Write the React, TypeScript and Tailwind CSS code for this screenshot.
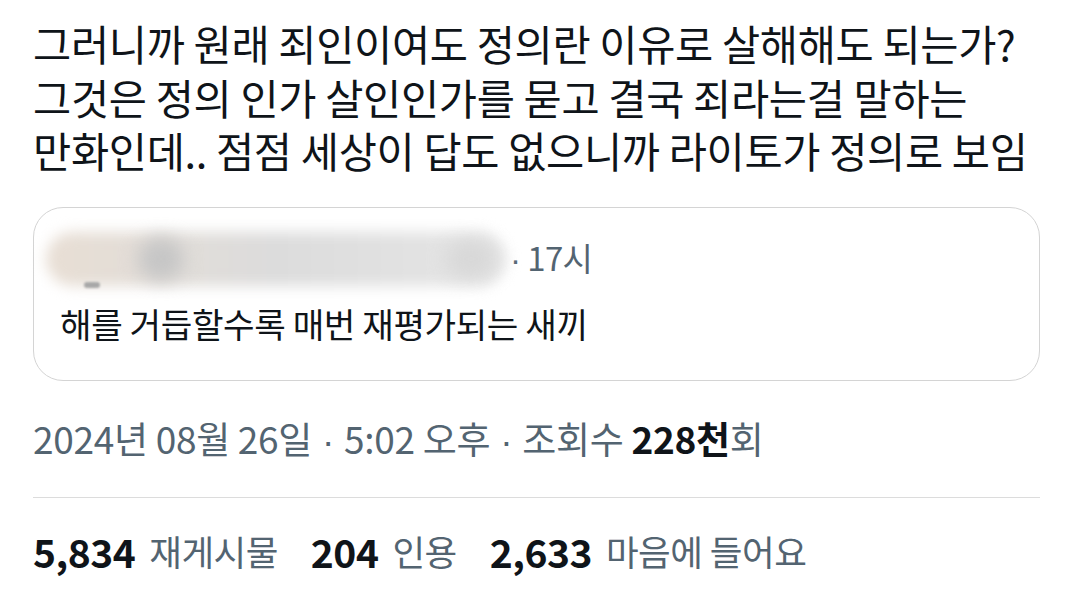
export default function App() {
  const lines = [
    "그러니까 원래 죄인이여도 정의란 이유로 살해해도 되는가?",
    "그것은 정의 인가 살인인가를 묻고 결국 죄라는걸 말하는",
    "만화인데.. 점점 세상이 답도 없으니까 라이토가 정의로 보임",
  ];

  const dot = (
    <span style={{ fontFamily: '"Liberation Sans", sans-serif' }}> · </span>
  );

  const stats = [
    { n: "5,834", label: "재게시물" },
    { n: "204", label: "인용" },
    { n: "2,633", label: "마음에 들어요" },
  ];

  return (
    <div
      className="w-[1072px] h-[596px] bg-white overflow-hidden text-[#0f1419]"
      style={{ fontFamily: '"Noto Sans CJK KR", "Noto Sans", sans-serif' }}
    >
      <div className="pl-[33px] pr-[32px] pt-[17px]">
        {/* Tweet body */}
        <div className="text-[41.5px] leading-[53.5px] tracking-[-0.3px]">
          {lines.map((l) => (
            <div key={l} className="whitespace-nowrap">
              {l}
            </div>
          ))}
        </div>

        {/* Quoted tweet */}
        <div className="mt-[29px] h-[174px] rounded-[30px] border border-[#d4d4d4] px-[12px] pt-[20px]">
          <div className="flex items-center gap-[4px] h-[62px]">
            <div className="relative w-[460px] h-[54px]">
              <div className="absolute inset-0 rounded-full bg-gradient-to-r from-[#e8ded4] via-[#dcdcdc] to-[#e6e6e6] blur-[7px]" />
              <div className="absolute left-[92px] top-[6px] w-[46px] h-[42px] rounded-full bg-[#c6c6c6] blur-[9px]" />
              <div className="absolute left-[400px] top-[8px] w-[50px] h-[38px] rounded-full bg-[#d8d8d8] blur-[9px]" />
              <div className="absolute left-[38px] top-[50px] w-[16px] h-[6px] rounded-full bg-[#a8a8a8] blur-[1px]" />
            </div>
            <span className="text-[33px] text-[#536471] tracking-[-0.6px]">
              <span style={{ fontFamily: '"Liberation Sans", sans-serif' }}>·</span> 17시
            </span>
          </div>
          <div className="mt-[13px] pl-[14px] text-[34.3px] leading-[40px] tracking-[-0.4px]">
            해를 거듭할수록 매번 재평가되는 새끼
          </div>
        </div>

        {/* Timestamp */}
        <div className="mt-[35px] text-[37px] leading-[44px] text-[#536471] tracking-[-0.3px] whitespace-nowrap">
          2024년 08월 26일{dot}5:02 오후{dot}조회수{" "}
          <span className="font-bold text-[#0f1419]">228천</span>회
        </div>

        {/* Divider */}
        <div className="mt-[33px] h-px bg-[#dcdcdc]" />

        {/* Stats */}
        <div className="mt-[31px] flex items-center gap-[33px] leading-[44px] tracking-[-0.5px] whitespace-nowrap">
          {stats.map((s) => (
            <div key={s.n} className="flex items-center gap-[14px]">
              <span className="font-bold text-[39px]">{s.n}</span>
              <span className="text-[35.5px] text-[#536471]">{s.label}</span>
            </div>
          ))}
        </div>
      </div>
    </div>
  );
}
